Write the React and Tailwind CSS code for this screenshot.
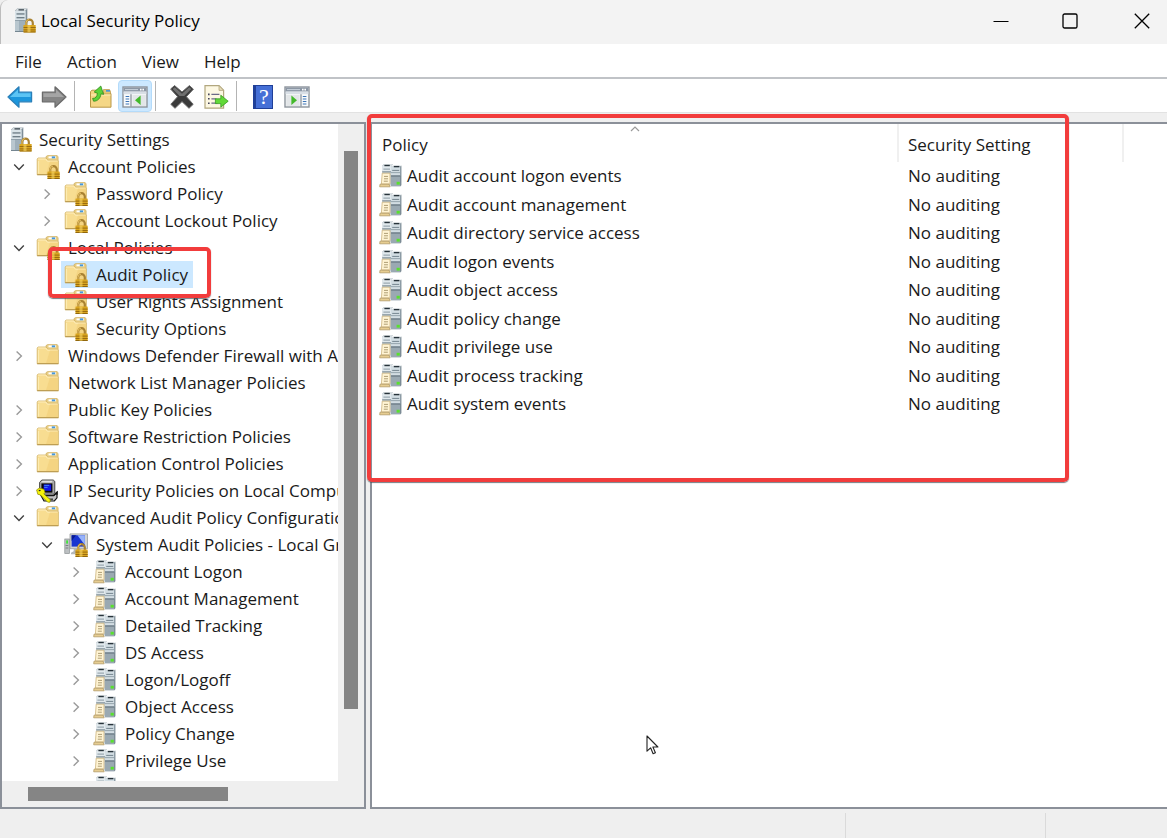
import React from "react";

function Lock() {
  return (
    <g>
      <path d="M14.2 17.5v-3a3.3 3.3 0 0 1 6.6 0v3" fill="none" stroke="#a98232" strokeWidth="2.2" />
      <path d="M14 17v-2.6a3.4 3.4 0 0 1 3-3.3" fill="none" stroke="#ecc766" strokeWidth="0.9" />
      <rect x="11.5" y="16.5" width="12.2" height="7.5" rx="0.6" fill="#d9a520" />
      <rect x="11.5" y="18.6" width="12.2" height="1" fill="#9a6d10" />
      <rect x="11.5" y="21" width="12.2" height="1" fill="#9a6d10" />
      <rect x="11.5" y="23.1" width="12.2" height="0.9" fill="#8a600c" />
      <rect x="15.5" y="16.8" width="3" height="7" fill="#f4d263" opacity="0.65" />
    </g>
  );
}

function ServerLockIcon() {
  return (
    <svg width="24" height="26" viewBox="0 0 24 26" className="shrink-0" aria-hidden="true">
      <path d="M1.2 3 3 .8h10.2l-2 2.2z" fill="#e6ecef" stroke="#98a3aa" strokeWidth="0.6" />
      <path d="M11.3 3l2-2.2v21l-2 2.4z" fill="#7d8d98" />
      <rect x="1" y="3" width="10.5" height="20.6" fill="#9fb0bb" />
      <rect x="1" y="3" width="4" height="20.6" fill="#b9c7cf" />
      <rect x="1" y="3" width="10.5" height="9.2" fill="#d9e3e8" />
      <rect x="4.5" y="1.2" width="5.5" height="1.3" fill="#3d4a52" />
      <rect x="2.5" y="5.4" width="8" height="1.1" fill="#566771" />
      <rect x="2.5" y="9.2" width="8" height="1.1" fill="#566771" />
      <rect x="1" y="12.1" width="10.5" height="0.8" fill="#8797a2" />
      <rect x="1" y="23" width="10.5" height="0.9" fill="#6d7e89" />
      <g transform="translate(-2 0.4)"><Lock /></g>
    </svg>
  );
}

function FolderShape() {
  return (
    <g>
      <path d="M10 1.6 11.6.6h9.6l.9 1.3v4.5H10z" fill="#e9cf86" stroke="#cfae5e" strokeWidth="0.7" />
      <rect x="12.5" y="1.4" width="7.5" height="1.9" fill="#fff" />
      <rect x="15.8" y="1.4" width="3.4" height="1.9" fill="#4597dc" />
      <path d="M1.2 4.2 2 3h8.2l1.5 2.2h9.8l.9.9v13.6H1.2z" fill="#f8dd91" stroke="#d2b264" strokeWidth="0.8" />
      <path d="M2 4h7.8l1.5 2.1h10.3" fill="none" stroke="#fff1c4" strokeWidth="0.9" />
      <path d="M14 6.5h7.8v12.8H10z" fill="#f2cf78" opacity="0.6" />
      <path d="M1.2 19.7h21.2" stroke="#b6954b" strokeWidth="1" />
      <path d="M2.6 6v12.5" stroke="#fff0bd" strokeWidth="0.8" />
    </g>
  );
}

function FolderIcon({ lock }) {
  return (
    <svg width="24" height="24" viewBox="0 0 24 24" className="shrink-0" aria-hidden="true">
      <FolderShape />
      {lock && <Lock />}
    </svg>
  );
}

function PolicyIcon() {
  return (
    <svg width="24" height="24" viewBox="0 0 24 24" className="shrink-0" aria-hidden="true">
      <path d="M3.4 1.6 5 .2h8.6L12.4 1.6z" fill="#edf1f3" stroke="#a9b4ba" strokeWidth="0.5" />
      <rect x="3.2" y="1.6" width="9.2" height="20" fill="#c3ced4" />
      <rect x="3.2" y="1.6" width="9.2" height="6.4" fill="#e1e9ed" />
      <rect x="5.4" y="0.8" width="5.4" height="1.4" fill="#28343b" />
      <rect x="4.4" y="4.6" width="6.6" height="1" fill="#8b9aa3" />
      <rect x="3.2" y="7.4" width="8.8" height="0.9" fill="#6b7c86" />
      <path d="M12 2.8 13.4 1.6h8.8l-1 1.4z" fill="#dde4e8" />
      <path d="M21 2.8 22.4 1.6v19.6L21 22.4z" fill="#74848e" />
      <rect x="12" y="2.8" width="9.2" height="19.6" fill="#9aa9b2" />
      <rect x="12" y="2.8" width="9.2" height="9" fill="#d2dde3" />
      <rect x="14.8" y="1.9" width="5.6" height="1.4" fill="#28343b" />
      <rect x="13.2" y="5.9" width="7" height="1" fill="#75868f" />
      <rect x="12" y="8.2" width="9.2" height="0.9" fill="#8f9ea7" />
      <rect x="12" y="11.4" width="9.2" height="1.1" fill="#5c6d77" />
      <rect x="17.6" y="17.8" width="3.2" height="2.8" fill="#58e12e" />
      <path d="M3.2 9.2h7.8V20H2.4z" fill="#fff4d4" stroke="#cdb47e" strokeWidth="0.8" />
      <path d="M1 20.2h9l1.2 2.6H.7z" fill="#e7cd91" stroke="#b39a66" strokeWidth="0.8" />
      <path d="M5 12.4h4M5 14.8h4M4.8 17.2h4" stroke="#a59469" strokeWidth="0.9" />
    </svg>
  );
}

function IpSecurityIcon() {
  return (
    <svg width="24" height="24" viewBox="0 0 24 24" className="shrink-0" aria-hidden="true">
      <path d="M5.8 1h11.4l1.6 1.4v11.4l-1.6 1.4H3.6V3.4z" fill="#a9a9a9" stroke="#3a3a3a" strokeWidth="0.9" />
      <path d="M5 3.2 6.6 1.8h10.2l-1.4 1.8z" fill="#e1e1e1" />
      <path d="M5.4 4.4h11v9.2h-11z" fill="#090909" />
      <path d="M7.6 5.4h7.6v6.4H7.6z" fill="#1117e8" />
      <path d="M8.2 6.4h5M8.2 8.4h3.4" stroke="#4ea0ff" strokeWidth="0.8" />
      <path d="M5 16.6h12.6l3.4-3.4v5.6L18.4 22H8z" fill="#c2c2c2" stroke="#151515" strokeWidth="1.2" />
      <path d="M17.6 16.6 21 13.4v2.4" fill="none" stroke="#111" strokeWidth="1.4" />
      <path d="M12 20.2h5" stroke="#333" strokeWidth="1.3" />
      <path d="M.6 10.9 3.4 9.1l4.6 1.2 1 3.4-1.2 1.2 6.6 5.9-.6 2.5-2.2-.2-7.2-7.2-2.6-.6z" fill="#f7f30a" stroke="#8a8600" strokeWidth="0.7" />
      <path d="m2.8 11.7 1.7-.4" stroke="#222" strokeWidth="1.3" />
    </svg>
  );
}

function SystemAuditIcon() {
  return (
    <svg width="24" height="24" viewBox="0 0 24 24" className="shrink-0" aria-hidden="true">
      <rect x="0.8" y="6" width="4.6" height="14.5" fill="#bcc0c2" stroke="#8a8f92" strokeWidth="0.7" />
      <path d="M1.6 12.5h2.7M1.6 15h2.7" stroke="#697073" strokeWidth="0.8" />
      <rect x="2.2" y="7.4" width="1.8" height="3.2" fill="#3fe63a" />
      <path d="M6 .9h17.5v14.8H6z" fill="#d2d4d4" stroke="#989b9b" strokeWidth="0.8" />
      <path d="M7.6 2.2h13.3v11.4H7.6z" fill="#1834d0" />
      <path d="M13.4 2.2h7.5v9.8z" fill="#97b3fa" />
      <path d="M7.6 8 12 2.2H7.6z" fill="#081a92" />
      <path d="M9.7 16h7v2.3l2.4 1.5v1.4H7v-1.4l2.7-1.5z" fill="#b5b8b8" />
      <Lock />
    </svg>
  );
}

const ICONS = {
  root: <ServerLockIcon />,
  locked: <FolderIcon lock />,
  folder: <FolderIcon />,
  ip: <IpSecurityIcon />,
  system: <SystemAuditIcon />,
  policy: <PolicyIcon />,
};

const TREE = [
  [0, "", "root", "Security Settings"],
  [1, "open", "locked", "Account Policies"],
  [2, "closed", "locked", "Password Policy"],
  [2, "closed", "locked", "Account Lockout Policy"],
  [1, "open", "locked", "Local Policies"],
  [2, "", "locked", "Audit Policy"],
  [2, "", "locked", "User Rights Assignment"],
  [2, "", "locked", "Security Options"],
  [1, "closed", "folder", "Windows Defender Firewall with Ad"],
  [1, "", "folder", "Network List Manager Policies"],
  [1, "closed", "folder", "Public Key Policies"],
  [1, "closed", "folder", "Software Restriction Policies"],
  [1, "closed", "folder", "Application Control Policies"],
  [1, "closed", "ip", "IP Security Policies on Local Compu"],
  [1, "open", "folder", "Advanced Audit Policy Configuratio"],
  [2, "open", "system", "System Audit Policies - Local Gr"],
  [3, "closed", "policy", "Account Logon"],
  [3, "closed", "policy", "Account Management"],
  [3, "closed", "policy", "Detailed Tracking"],
  [3, "closed", "policy", "DS Access"],
  [3, "closed", "policy", "Logon/Logoff"],
  [3, "closed", "policy", "Object Access"],
  [3, "closed", "policy", "Policy Change"],
  [3, "closed", "policy", "Privilege Use"],
  [3, "", "policy", ""],
];

const INDENT = ["pl-2", "pl-2", "pl-9", "pl-[65px]"];

function Expander({ state }) {
  return (
    <span className="flex w-[18px] shrink-0 items-center justify-center">
      {state === "open" && (
        <svg width="12" height="12" viewBox="0 0 12 12" fill="none" stroke="#404040" strokeWidth="1.4" aria-hidden="true">
          <path d="M1.2 3.6 6 8.4l4.8-4.8" />
        </svg>
      )}
      {state === "closed" && (
        <svg width="12" height="12" viewBox="0 0 12 12" fill="none" stroke="#9a9a9a" strokeWidth="1.4" aria-hidden="true">
          <path d="M3.6 1.4 8.4 6l-4.8 4.8" />
        </svg>
      )}
    </span>
  );
}

function TreeRow({ row }) {
  const [level, state, icon, label] = row;
  const selected = label === "Audit Policy";
  return (
    <li
      role="treeitem"
      aria-level={level + 1}
      aria-selected={selected}
      aria-expanded={state ? state === "open" : undefined}
      className={`relative flex h-[27px] items-center gap-[5px] ${INDENT[level]}`}
    >
      {level > 0 && <Expander state={state} />}
      <span
        className={`flex h-full items-center whitespace-nowrap ${level > 0 ? "gap-2 pr-[5px] pl-[3px]" : "gap-[5px]"} ${
          selected ? "bg-[#cce8ff]" : ""
        }`}
      >
        {ICONS[icon]}
        <span>{label}</span>
      </span>
      {selected && (
        <span className="pointer-events-none absolute -top-[14px] left-[46px] z-10 h-[51px] w-[163px] rounded-[5px] border-[4px] border-[#f23c3c] shadow-[0_1px_1px_rgba(60,70,80,0.7)]" />
      )}
    </li>
  );
}

function Arrow({ flip, light, dark, edge }) {
  return (
    <svg width="26" height="24" viewBox="0 0 26 24" className={flip ? "-scale-x-100" : ""} aria-hidden="true">
      <path d="M1 12 12 1.8v5.4h12.6v9.6H12v5.4z" fill={dark} stroke={edge} strokeWidth="1.2" strokeLinejoin="round" />
      <path d="M3 12l8-7.6v3.8h12.6V12z" fill={light} />
    </svg>
  );
}

function FolderUp() {
  return (
    <svg width="24" height="24" viewBox="0 0 24 24" aria-hidden="true">
      <path d="M1.5 6.6 3 5.2h7l1.5 2.2h9l1.5 1.2v13.6H1.5z" fill="#f5d785" stroke="#b99748" />
      <path d="M14.5 4.5h6l1 2v2.5h-7z" fill="#e6c670" stroke="#b99748" strokeWidth="0.7" />
      <rect x="17" y="5" width="4" height="1.7" fill="#4a97d8" />
      <path d="M2 10h19.5" stroke="#fff0ba" />
      <path d="M3.6 13.4c2.8.2 4.6-1.8 4.8-5.2L5.2 7 11.8 1l2.8 8.4-2.6-.6c-.6 4.8-3.4 7.4-7.4 7.4z" fill="#5bd338" stroke="#2d8c1c" strokeWidth="0.8" />
    </svg>
  );
}

function ConsoleWindow({ flip }) {
  return (
    <svg width="26" height="22" viewBox="0 0 26 22" aria-hidden="true">
      <rect x="1" y="1" width="24" height="20" fill="#f8fafb" stroke="#8d949c" strokeWidth="1.4" />
      <rect x="1.6" y="1.6" width="22.8" height="4" fill="#8c97a5" />
      <path d="M3 3.6h13" stroke="#cbd3dc" />
      <path d="M18 3.6h1.6M20.4 3.6H22" stroke="#fff" strokeWidth="1.6" />
      <rect x="1.6" y="5.6" width="22.8" height="2.6" fill="#d9dfe6" />
      <g transform={flip ? "translate(26 0) scale(-1 1)" : undefined}>
        <path d="M9 8.2V20.4" stroke="#838c96" strokeWidth="1.2" />
        <path d="M3.6 10.5h3.6M3.6 13h3.6M3.6 15.5h3.6M3.6 18h3.6" stroke="#3e76b8" strokeWidth="1.2" />
        <rect x="10.4" y="9" width="13.4" height="11" fill="#e3e6e8" />
        <path d="M18.6 9.6V19l-5.6-4.7z" fill="#43b92b" />
      </g>
    </svg>
  );
}

function DeleteIcon() {
  return (
    <svg width="26" height="26" viewBox="0 0 26 26" aria-hidden="true">
      <path d="M1.6 5l4-3.4L13 8l7.4-6.4 4 3.6-7 7.5 6.8 7.6-4.2 4-7-6.7-7 6.7-4.2-4 6.8-7.6z" fill="#3b3b3b" stroke="#6a6a6a" strokeLinejoin="round" />
      <path d="M3.6 5l2.2-1.8L13 9.8l7.2-6.6L22.4 5l-7.2 7h-4.6z" fill="#707070" />
    </svg>
  );
}

function ExportIcon() {
  return (
    <svg width="26" height="26" viewBox="0 0 26 26" aria-hidden="true">
      <path d="M2 1.6h14l4.6 4.6v18H2z" fill="#fdf8e3" stroke="#b2a77f" strokeWidth="1.2" />
      <path d="M16 1.6v4.8h4.6z" fill="#e6dcb8" stroke="#b2a77f" strokeWidth="0.8" />
      <path d="M8.4 10.4h8M8.4 14.8h5M8.4 19.2h6" stroke="#6c6a86" strokeWidth="1.3" />
      <path d="M5 10.4h1.6M5 14.8h1.6M5 19.2h1.6" stroke="#44445c" strokeWidth="1.6" />
      <path d="M12.4 14.8h5.4v-3.6l7.4 6-7.4 6v-3.6h-5.4z" fill="#62d938" stroke="#379b21" strokeWidth="0.8" />
    </svg>
  );
}

function HelpIcon() {
  return (
    <span className="flex h-6 w-5 items-center justify-center border border-l-[3px] border-[#1f3f98] bg-[#456fd6] font-['Liberation_Serif',serif] text-[22px] leading-none text-white">
      ?
    </span>
  );
}

function ToolButton({ label, active, children }) {
  return (
    <button
      type="button"
      aria-label={label}
      className={`flex h-8 w-[34px] items-center justify-center rounded-sm pt-[2px] ${
        active ? "border border-[#b4dbfa] bg-[#cce8ff]" : ""
      }`}
    >
      {children}
    </button>
  );
}

function Separator() {
  return <span className="mr-[9px] ml-[3px] h-[30px] w-px bg-[#b4b4b4]" />;
}

const POLICIES = [
  "Audit account logon events",
  "Audit account management",
  "Audit directory service access",
  "Audit logon events",
  "Audit object access",
  "Audit policy change",
  "Audit privilege use",
  "Audit process tracking",
  "Audit system events",
];

export default function App() {
  return (
    <div className="flex h-screen flex-col overflow-hidden bg-[#efefef] font-['Open_Sans','Noto_Sans',sans-serif] text-[17px] leading-6 text-[#1a1a1a]">
      <header className="flex h-11 shrink-0 items-center rounded-tl-lg border-l border-[#bdbdbd] bg-[#f3f3f3] pl-[13px]">
        <div className="flex flex-1 items-center gap-[3px] pb-[2px]">
          <ServerLockIcon />
          <h1 className="text-[17px] text-black">Local Security Policy</h1>
        </div>
        <div className="flex h-full pb-[3px]">
          <button type="button" aria-label="Minimize" className="flex w-[70px] items-center justify-center">
            <svg width="16" height="16" viewBox="0 0 16 16" aria-hidden="true"><path d="M.5 8.5h15" stroke="#000" /></svg>
          </button>
          <button type="button" aria-label="Maximize" className="flex w-[68px] items-center justify-center">
            <svg width="16" height="16" viewBox="0 0 16 16" fill="none" stroke="#000" strokeWidth="1.3" aria-hidden="true"><rect x="1" y="1" width="14" height="14" rx="1.6" /></svg>
          </button>
          <button type="button" aria-label="Close" className="flex w-[63px] items-center justify-center pl-3">
            <svg width="16" height="16" viewBox="0 0 16 16" stroke="#000" strokeWidth="1.3" aria-hidden="true"><path d="M.8.8l14.4 14.4M15.2.8.8 15.2" /></svg>
          </button>
        </div>
      </header>

      <nav className="flex h-[35px] shrink-0 items-center gap-[25px] border-b-2 border-[#c0c3c7] bg-white pt-[2px] pl-[15px]">
        <button type="button">File</button>
        <button type="button">Action</button>
        <button type="button">View</button>
        <button type="button">Help</button>
      </nav>

      <div role="toolbar" className="flex h-[34px] shrink-0 items-center border-b border-[#e2e2e2] bg-white pt-px pl-[3px]">
        <ToolButton label="Back"><Arrow light="#5cc4f4" dark="#1c96dc" edge="#2a7fb8" /></ToolButton>
        <ToolButton label="Forward"><Arrow flip light="#a5a5a5" dark="#858585" edge="#6a6a6a" /></ToolButton>
        <Separator />
        <ToolButton label="Up one level"><FolderUp /></ToolButton>
        <ToolButton label="Show or hide console tree" active><ConsoleWindow /></ToolButton>
        <Separator />
        <ToolButton label="Delete"><DeleteIcon /></ToolButton>
        <ToolButton label="Export list"><ExportIcon /></ToolButton>
        <Separator />
        <ToolButton label="Help topics"><HelpIcon /></ToolButton>
        <ToolButton label="Show or hide action pane"><ConsoleWindow flip /></ToolButton>
      </div>

      <main className="flex min-h-0 flex-1 gap-1 pt-[9px]">
        <section className="flex w-[366px] shrink-0 flex-col border-2 border-[#8b9099] bg-[#efefef]">
          <div className="flex min-h-0 flex-1">
            <ul role="tree" aria-label="Console tree" className="min-w-0 flex-1 overflow-hidden bg-white pt-[2px]">
              {TREE.map((row, i) => (
                <TreeRow key={i} row={row} />
              ))}
            </ul>
            <div className="flex w-[26px] shrink-0 flex-col items-center pt-[27px] pb-[72px]">
              <div className="w-[14px] flex-1 bg-[#858585]" />
            </div>
          </div>
          <div className="flex h-[26px] shrink-0 items-center pl-[26px]">
            <div className="h-[14px] w-[200px] bg-[#858585]" />
          </div>
        </section>

        <section className="relative min-w-0 flex-1 border-y-2 border-l-2 border-[#8b9099] bg-white">
          <table className="w-full table-fixed border-collapse text-left">
            <thead>
              <tr className="h-[38px]">
                <th className="relative w-[526px] border-r-2 border-[#f0f0f0] pt-[3px] pl-[10px] font-normal">
                  Policy
                  <svg width="10" height="6" viewBox="0 0 10 6" fill="none" stroke="#9a9a9a" strokeWidth="1.2" className="absolute top-[2px] left-1/2 -translate-x-1/2" aria-hidden="true">
                    <path d="M1 5l4-4 4 4" />
                  </svg>
                </th>
                <th className="w-[225px] border-r-2 border-[#f0f0f0] pt-[3px] pl-[9px] font-normal">Security Setting</th>
                <td />
              </tr>
            </thead>
            <tbody>
              {POLICIES.map((name) => (
                <tr key={name} className="h-[28px] even:h-[29px]">
                  <td className="pl-[7px]">
                    <span className="flex items-center gap-1">
                      <PolicyIcon />
                      {name}
                    </span>
                  </td>
                  <td className="pl-[10px]">No auditing</td>
                  <td />
                </tr>
              ))}
            </tbody>
          </table>
          <div className="pointer-events-none absolute -top-[10px] -left-[5px] z-10 h-[368px] w-[702px] rounded-[5px] border-4 border-[#f23c3c] shadow-[0_1px_1px_rgba(60,70,80,0.7)]" />
          <svg width="14" height="20" viewBox="0 0 14 20" className="absolute top-[611px] left-[274px]" aria-hidden="true">
            <path d="M1 1v15.2l3.6-3.4 2.5 5.9 2.3-1-2.5-5.7h5z" fill="#fff" stroke="#222" strokeWidth="1.1" strokeLinejoin="round" />
          </svg>
        </section>
      </main>

      <footer className="flex h-[29px] shrink-0 pt-1">
        <div className="flex-1" />
        <div className="w-[200px] border-l border-[#dadada]" />
        <div className="w-[122px] border-l border-[#dadada]" />
      </footer>
    </div>
  );
}
